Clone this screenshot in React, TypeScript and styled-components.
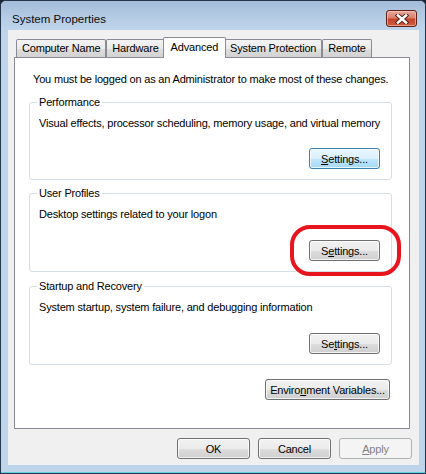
import React from "react";
import styled, { createGlobalStyle } from "styled-components";

const GlobalStyle = createGlobalStyle`
  html, body {
    margin: 0;
    padding: 0;
    background: #1b2632;
  }
  body {
    font-family: "Liberation Sans", Arial, sans-serif;
    font-size: 11px;
    letter-spacing: -0.18px;
    color: #000;
  }
`;

const Window = styled.div`
  box-sizing: border-box;
  width: 426px;
  height: 474px;
  display: flex;
  flex-direction: column;
  border: 1px solid #26364a;
  border-radius: 6px 6px 0 0;
  background: #bdd4eb;
  box-shadow: inset 0 -1px 0 #63cde3;
`;

const TitleBar = styled.div`
  flex: 0 0 29px;
  display: flex;
  align-items: flex-start;
  padding: 9px 8px 0 11px;
  box-sizing: border-box;
  border-radius: 5px 5px 0 0;
  background: linear-gradient(180deg, #a3bcd8 0%, #b4cbe4 55%, #bed5ec 100%);
`;

const Title = styled.div`
  flex: 1 1 auto;
  line-height: 18px;
  font-size: 11.5px;
  letter-spacing: 0;
  margin-top: -9px;
  padding-top: 9px;
  color: #0c0c0c;
`;

const CloseButton = styled.div`
  width: 31px;
  height: 17px;
  box-sizing: border-box;
  display: flex;
  align-items: center;
  justify-content: center;
  border: 1px solid #5e2118;
  border-radius: 3px;
  background: linear-gradient(180deg, #e7aa9c 0%, #d9806c 45%, #c4442c 55%, #d05d3f 100%);
  box-shadow: inset 0 0 0 1px rgba(255, 210, 200, 0.55);
`;

const Client = styled.div`
  flex: 0 0 435px;
  margin: 0 6px 0 7px;
  box-sizing: border-box;
  display: flex;
  flex-direction: column;
  padding: 7px 9px 0 6px;
  background: #f0f0f0;
`;

const TabStrip = styled.div`
  flex: 0 0 20px;
  display: flex;
  align-items: flex-end;
  padding-left: 2px;
  position: relative;
  z-index: 1;
`;

const Tab = styled.div<{ $active?: boolean }>`
  box-sizing: border-box;
  height: ${(p) => (p.$active ? "21px" : "18px")};
  margin: ${(p) => (p.$active ? "0 -2px -1px" : "0")};
  padding: ${(p) => (p.$active ? "2px 7px 0" : "1px 5px 0")};
  border: 1px solid #898c95;
  border-bottom: 0;
  border-radius: 2px 2px 0 0;
  line-height: 14px;
  white-space: nowrap;
  position: relative;
  z-index: ${(p) => (p.$active ? 2 : 1)};
  background: ${(p) =>
    p.$active ? "#ffffff" : "linear-gradient(180deg, #f3f3f3 0%, #ebebeb 50%, #dedede 51%, #d2d2d2 100%)"};
`;

const Panel = styled.div`
  flex: 0 0 372px;
  box-sizing: border-box;
  border: 1px solid #898c95;
  background: #ffffff;
  display: flex;
  flex-direction: column;
  padding: 14px 17px 0 14px;
`;

const Note = styled.div`
  margin-left: 4px;
  line-height: 14px;
`;

const Group = styled.div<{ $gap: number }>`
  margin-top: ${(p) => p.$gap}px;
  box-sizing: border-box;
  border: 1px solid #d5dfe5;
  border-radius: 3px;
  padding: 0 11px 10px 9px;
  display: flex;
  flex-direction: column;
`;

const GroupLabel = styled.div`
  align-self: flex-start;
  margin: -7px 0 0 -2px;
  padding: 0 2px;
  background: #ffffff;
  line-height: 13px;
`;

const GroupText = styled.div`
  margin-top: 7px;
  line-height: 14px;
`;

const ButtonRow = styled.div<{ $top: number; $right?: number }>`
  display: flex;
  justify-content: flex-end;
  gap: 8px;
  margin-top: ${(p) => p.$top}px;
  margin-right: ${(p) => p.$right ?? 0}px;
`;

const Marked = styled.div`
  position: relative;
`;

const RedMark = styled.div`
  position: absolute;
  left: -19px;
  top: -15px;
  width: 111px;
  height: 51px;
  box-sizing: border-box;
  border: 4px solid #e8141e;
  border-radius: 20px;
  pointer-events: none;
`;

const Button = styled.button<{ $w: number; $variant?: "focus" | "disabled" }>`
  box-sizing: border-box;
  width: ${(p) => p.$w}px;
  height: 21px;
  padding: 0;
  font-family: "Liberation Sans", Arial, sans-serif;
  font-size: 11px;
  letter-spacing: -0.18px;
  border-radius: 3px;
  border: 1px solid
    ${(p) => (p.$variant === "focus" ? "#3c7fb1" : p.$variant === "disabled" ? "#adb2b5" : "#707070")};
  color: ${(p) => (p.$variant === "disabled" ? "#838383" : "#000")};
  background: ${(p) =>
    p.$variant === "focus"
      ? "linear-gradient(180deg, #eaf6fd 0%, #d9f0fc 50%, #bee6fd 51%, #a7d9f5 100%)"
      : p.$variant === "disabled"
      ? "#f4f4f4"
      : "linear-gradient(180deg, #f2f2f2 0%, #ebebeb 50%, #dddddd 51%, #cfcfcf 100%)"};
  box-shadow: inset 0 0 0 1px
    ${(p) => (p.$variant === "disabled" ? "#f4f4f4" : "rgba(255, 255, 255, 0.75)")};
`;

const Footer = styled.div`
  display: flex;
  justify-content: flex-end;
  gap: 8px;
  margin: 9px -2px 0 0;
`;

const Key = styled.span`
  text-decoration: underline;
  text-underline-offset: 1px;
`;

const CloseGlyph = () => (
  <svg width="14" height="10" viewBox="0 0 14 10">
    <path d="M3 1.5 L11 8.5 M11 1.5 L3 8.5" stroke="#4a1c14" strokeWidth="4.4" strokeLinecap="square" />
    <path d="M3 1.5 L11 8.5 M11 1.5 L3 8.5" stroke="#ffffff" strokeWidth="2.6" strokeLinecap="square" />
  </svg>
);

const tabs = ["Computer Name", "Hardware", "Advanced", "System Protection", "Remote"];

const App: React.FC = () => {
  return (
    <>
      <GlobalStyle />
      <Window>
        <TitleBar>
          <Title>System Properties</Title>
          <CloseButton>
            <CloseGlyph />
          </CloseButton>
        </TitleBar>
        <Client>
          <TabStrip>
            {tabs.map((t) => (
              <Tab key={t} $active={t === "Advanced"}>
                {t}
              </Tab>
            ))}
          </TabStrip>
          <Panel>
            <Note>You must be logged on as an Administrator to make most of these changes.</Note>

            <Group $gap={16}>
              <GroupLabel>Performance</GroupLabel>
              <GroupText>Visual effects, processor scheduling, memory usage, and virtual memory</GroupText>
              <ButtonRow $top={18}>
                <Button $w={71} $variant="focus">
                  <Key>S</Key>ettings...
                </Button>
              </ButtonRow>
            </Group>

            <Group $gap={13}>
              <GroupLabel>User Profiles</GroupLabel>
              <GroupText>Desktop settings related to your logon</GroupText>
              <ButtonRow $top={19}>
                <Marked>
                  <Button $w={71}>
                    S<Key>e</Key>ttings...
                  </Button>
                  <RedMark />
                </Marked>
              </ButtonRow>
            </Group>

            <Group $gap={14}>
              <GroupLabel>Startup and Recovery</GroupLabel>
              <GroupText>System startup, system failure, and debugging information</GroupText>
              <ButtonRow $top={19}>
                <Button $w={71}>
                  Se<Key>t</Key>tings...
                </Button>
              </ButtonRow>
            </Group>

            <ButtonRow $top={14} $right={2}>
              <Button $w={125}>
                Enviro<Key>n</Key>ment Variables...
              </Button>
            </ButtonRow>
          </Panel>
          <Footer>
            <Button $w={73}>OK</Button>
            <Button $w={73}>Cancel</Button>
            <Button $w={73} $variant="disabled">
              <Key>A</Key>pply
            </Button>
          </Footer>
        </Client>
      </Window>
    </>
  );
};

export default App;
